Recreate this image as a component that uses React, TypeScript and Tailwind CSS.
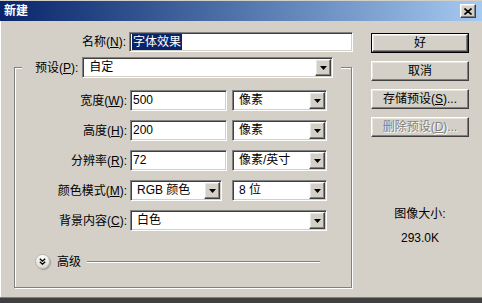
import React from 'react';

// 经典 Windows 凹陷输入框
const sunken =
  'border border-t-[#808080] border-l-[#808080] border-b-white border-r-white shadow-[inset_1px_1px_0_#404040,inset_-1px_-1px_0_#d4d0c8] p-[1px] bg-white';

const raised =
  'border border-t-white border-l-white border-r-[#404040] border-b-[#404040] shadow-[inset_-1px_-1px_0_#808080,inset_1px_1px_0_#e8e6e1] bg-[#d4d0c8]';

const Arrow: React.FC = () => (
  <span className={`flex h-full w-[16px] shrink-0 items-center justify-center ${raised}`}>
    <svg width="7" height="4" viewBox="0 0 7 4">
      <path d="M0 0h7L3.5 4z" fill="#000" />
    </svg>
  </span>
);

const Select: React.FC<{ w: string; text: string }> = ({ w, text }) => (
  <div className={`flex h-[21px] ${w} ${sunken}`}>
    <span className="flex-1 pl-[5px] leading-[17px]">{text}</span>
    <Arrow />
  </div>
);

const Input: React.FC<{ w: string; children: React.ReactNode }> = ({ w, children }) => (
  <div className={`flex h-[21px] ${w} ${sunken}`}>
    <span className="pl-[1px] leading-[17px]">{children}</span>
  </div>
);

const Label: React.FC<{ text: string; k: string }> = ({ text, k }) => (
  <span className="w-[115px] shrink-0 pr-[3px] text-right">
    {text}(<u>{k}</u>):
  </span>
);

const Btn: React.FC<{ children: React.ReactNode; primary?: boolean; disabled?: boolean }> = ({
  children,
  primary,
  disabled,
}) => {
  const inner = (
    <div
      className={`flex h-full w-full items-center justify-center ${raised} ${
        disabled ? 'text-[#808080] [text-shadow:1px_1px_0_#fff]' : 'text-black'
      }`}
    >
      {children}
    </div>
  );
  return primary ? (
    <div className="h-[20px] w-[98px] border border-black">{inner}</div>
  ) : (
    <div className="h-[20px] w-[98px]">{inner}</div>
  );
};

export default function App() {
  return (
    <div className="h-[303px] w-[482px] overflow-hidden bg-[#d4d0c8] font-['Liberation_Sans','Noto_Sans_CJK_SC',sans-serif] text-[12px] leading-none text-black">
      {/* 标题栏 */}
      <div className="flex h-[21px] items-center justify-between border-t border-[#d4d0c8] bg-linear-to-r from-[#0a246a] to-[#a6caf0] pl-[4px] pr-[6px]">
        <span className="font-bold text-white">新建</span>
        <span className={`flex h-[14px] w-[16px] items-center justify-center ${raised}`}>
          <svg width="8" height="7" viewBox="0 0 8 7">
            <path d="M0.5 0.5l7 6M7.5 0.5l-7 6" stroke="#000" strokeWidth="1.6" />
          </svg>
        </span>
      </div>

      {/* 主体 */}
      <div className="flex h-[276px] border-l border-white pl-[13px] pt-[11px]">
        <div className="flex flex-col">
          <div className="flex items-center">
            <Label text="名称" k="N" />
            <div className={`flex h-[20px] w-[224px] ${sunken}`}>
              <span className="ml-[1px] bg-[#0a246a] px-[1px] leading-[16px] text-white">字体效果</span>
            </div>
          </div>

          {/* 分组框 */}
          <div className="mt-[15px] w-[338px] border border-[#808080] pb-[18px] shadow-[inset_1px_1px_0_#fff,1px_1px_0_#fff]">
            <div className="-mt-[11px] ml-[7px] flex w-fit items-center gap-[4px] bg-[#d4d0c8] pl-[13px] pr-[8px]">
              <span>
                预设(<u>P</u>):
              </span>
              <Select w="w-[251px]" text="自定" />
            </div>

            <div className="mt-[12px] flex flex-col gap-[9px]">
              <div className="flex items-center">
                <Label text="宽度" k="W" />
                <Input w="w-[97px]">500</Input>
                <div className="ml-[5px]">
                  <Select w="w-[95px]" text="像素" />
                </div>
              </div>
              <div className="flex items-center">
                <Label text="高度" k="H" />
                <Input w="w-[97px]">200</Input>
                <div className="ml-[5px]">
                  <Select w="w-[95px]" text="像素" />
                </div>
              </div>
              <div className="flex items-center">
                <Label text="分辨率" k="R" />
                <Input w="w-[97px]">72</Input>
                <div className="ml-[5px]">
                  <Select w="w-[95px]" text="像素/英寸" />
                </div>
              </div>
              <div className="flex items-center">
                <Label text="颜色模式" k="M" />
                <Select w="w-[92px]" text="RGB 颜色" />
                <div className="ml-[10px]">
                  <Select w="w-[95px]" text="8 位" />
                </div>
              </div>
              <div className="flex items-center">
                <Label text="背景内容" k="C" />
                <Select w="w-[197px]" text="白色" />
              </div>
            </div>

            {/* 高级 */}
            <div className="mt-[23px] flex h-[15px] items-center pl-[20px]">
              <span className="flex h-[15px] w-[15px] items-center justify-center rounded-full border border-[#b8b5ae] bg-linear-to-b from-white to-[#dcdad5] shadow-[1px_1px_1px_#a09d96]">
                <svg width="7" height="7" viewBox="0 0 7 7">
                  <path d="M0.8 0.8L3.5 3.2L6.2 0.8M0.8 3.8L3.5 6.2L6.2 3.8" stroke="#000" strokeWidth="1.3" fill="none" />
                </svg>
              </span>
              <span className="ml-[7px]">高级</span>
              <span className="ml-[6px] h-[2px] w-[233px] border-t border-b border-t-[#808080] border-b-white" />
            </div>
          </div>
        </div>

        {/* 按钮 */}
        <div className="ml-[18px] flex w-[98px] flex-col gap-[8px] pt-[1px]">
          <Btn primary>好</Btn>
          <Btn>取消</Btn>
          <Btn>
            存储预设(<u>S</u>)...
          </Btn>
          <Btn disabled>
            删除预设(<u>D</u>)...
          </Btn>
          <div className="mt-[62px] text-center leading-[15px]">图像大小:</div>
          <div className="mt-[1px] text-center leading-[15px]">293.0K</div>
        </div>
      </div>

      <div className="h-[6px] border-t border-[#808080] bg-[#404040]" />
    </div>
  );
}
